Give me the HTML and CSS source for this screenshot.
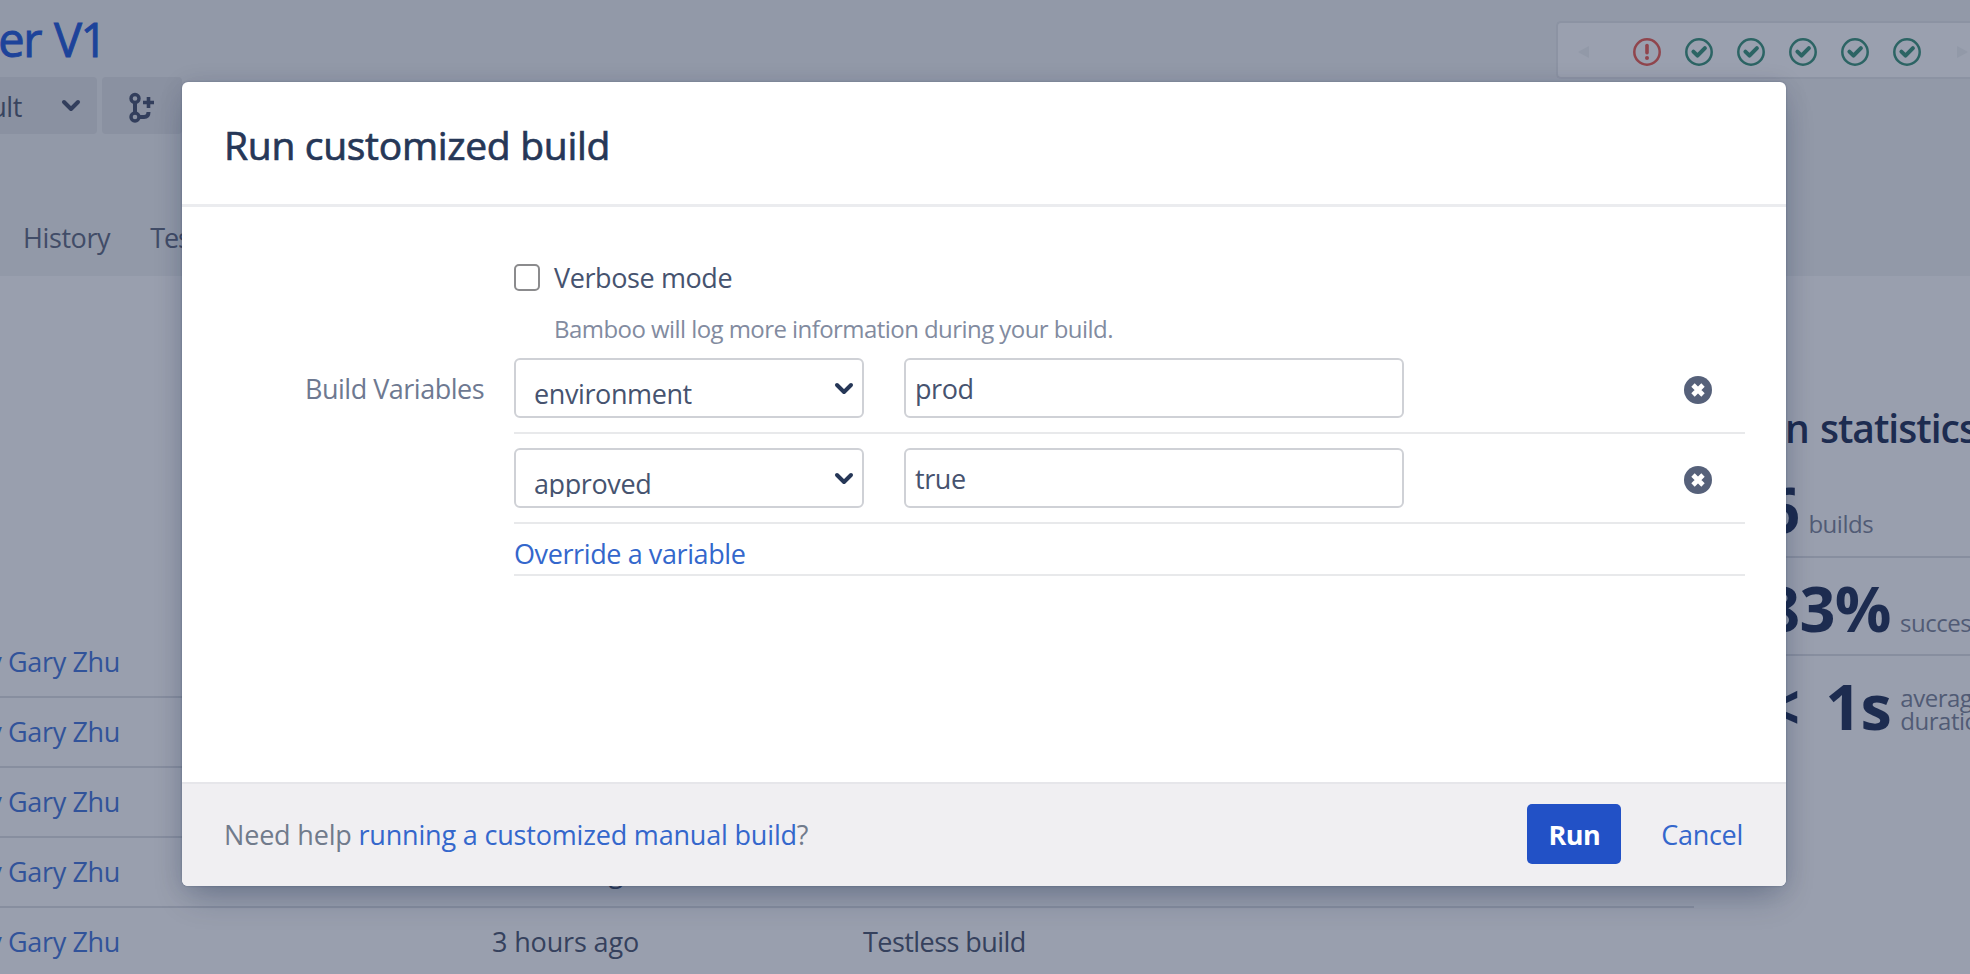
FILE: index.html
```html
<!DOCTYPE html>
<html lang="en">
<head>
<meta charset="utf-8">
<title>Run customized build</title>
<link rel="stylesheet" href="styles.css">
</head>
<body>
<svg class="sprite" aria-hidden="true">
  <symbol id="ok" viewBox="0 0 28 28"><circle cx="14" cy="14" r="12.7" fill="none" stroke="currentColor" stroke-width="2.5"/><path d="M8.4 13.6l4.1 4.1 7.4-7.6" fill="none" stroke="currentColor" stroke-width="4" stroke-linecap="round" stroke-linejoin="round"/></symbol>
  <symbol id="fail" viewBox="0 0 28 28"><circle cx="14" cy="14" r="12.7" fill="none" stroke="currentColor" stroke-width="2.5"/><path d="M14 7.6v7.2" fill="none" stroke="currentColor" stroke-width="3.6" stroke-linecap="round"/><circle cx="14" cy="20" r="2" fill="currentColor"/></symbol>
  <symbol id="chev" viewBox="0 0 20 14"><path d="M3 3l7 7 7-7" fill="none" stroke="currentColor" stroke-width="4" stroke-linecap="round" stroke-linejoin="round"/></symbol>
  <symbol id="remove" viewBox="0 0 28 28"><circle cx="14" cy="14" r="14" fill="#56617a"/><path d="M9 9l10 10M19 9l-10 10" stroke="#fff" stroke-width="4.8"/></symbol>
</svg>
<div class="page">
  <header class="top">
    <div class="plan">
      <h1 class="plan-title"><span class="t-plan">er V1</span></h1>
      <div class="toolbar">
        <div class="branch"><span>ult</span><svg class="chev"><use href="#chev"/></svg></div>
        <div class="create">
          <svg width="28" height="32" viewBox="0 0 28 32" fill="none" stroke="currentColor" stroke-width="3.4"><circle cx="7" cy="6.5" r="4"/><circle cx="7" cy="25" r="4"/><path d="M7 10.500v10.500M11 25h5q4.500 0 4.500-5" stroke-width="4"/><path d="M20.500 5v11M15 10.500h11" stroke-width="3.600"/></svg>
        </div>
      </div>
      <nav class="tabs"><span class="t-history">History</span><span>Tests</span></nav>
    </div>
    <div class="builds-nav">
      <span class="arrow"></span>
      <svg class="st bad"><use href="#fail"/></svg>
      <svg class="st"><use href="#ok"/></svg>
      <svg class="st"><use href="#ok"/></svg>
      <svg class="st"><use href="#ok"/></svg>
      <svg class="st"><use href="#ok"/></svg>
      <svg class="st"><use href="#ok"/></svg>
      <span class="arrow next"></span>
    </div>
  </header>
  <main class="main">
    <div class="history">
      <div class="row"><span class="who">y Gary Zhu</span></div>
      <div class="row"><span class="who">y Gary Zhu</span></div>
      <div class="row"><span class="who">y Gary Zhu</span></div>
      <div class="row"><span class="who">y Gary Zhu</span><span class="when">3 hours ago</span></div>
      <div class="row"><span class="who">y Gary Zhu</span><span class="when">3 hours ago</span><span class="tests">Testless build</span></div>
    </div>
    <aside class="stats">
      <h2 class="stats-title">n statistics</h2>
      <div class="stat first"><b>6</b><span>builds</span></div>
      <div class="stat"><b class="pct">83%</b><span>successful</span></div>
      <div class="stat last"><b class="dur">&lt; 1s</b><div><span class="two">average<br>duration</span></div></div>
    </aside>
  </main>
</div>
<section class="dialog" role="dialog">
  <header class="dialog-head"><h2 class="t-title">Run customized build</h2></header>
  <div class="dialog-body">
    <div class="verbose"><i class="check"></i><span class="t-verbose">Verbose mode</span></div>
    <p class="hint"><span class="t-hint">Bamboo will log more information during your build.</span></p>
    <div class="vars">
      <div class="label"><span class="t-label">Build Variables</span></div>
      <div class="list">
        <div class="var">
          <div class="select"><span class="clip"><span class="t-env">environment</span></span><svg class="chev"><use href="#chev"/></svg></div>
          <div class="input"><span class="t-prod">prod</span></div>
          <svg class="remove"><use href="#remove"/></svg>
        </div>
        <div class="var">
          <div class="select"><span class="clip"><span class="t-app">approved</span></span><svg class="chev"><use href="#chev"/></svg></div>
          <div class="input"><span class="t-true">true</span></div>
          <svg class="remove"><use href="#remove"/></svg>
        </div>
        <div class="override"><a class="t-over">Override a variable</a></div>
      </div>
    </div>
  </div>
  <footer class="dialog-foot">
    <div class="help">Need help <a>running a customized manual build</a>?</div>
    <div class="actions"><span class="run">Run</span><a class="t-cancel">Cancel</a></div>
  </footer>
</section>
</body>
</html>
```
FILE: styles.css
```css
* { box-sizing: border-box; }
body { margin: 0; height: 974px; overflow: hidden; position: relative; background: #999fae; font-family: "Open Sans", "Noto Sans", sans-serif; font-size: 27px; line-height: 40px; color: #46526c; }
h1, h2, p { margin: 0; font-weight: 500; }
span, a, b, h2 { white-space: nowrap; }
.sprite { position: absolute; width: 0; height: 0; }
.chev { width: 20px; height: 14px; flex: none; }
.page { height: 974px; overflow: hidden; display: flex; flex-direction: column; }

.top { height: 276px; flex: none; background: #9299a8; display: flex; justify-content: space-between; align-items: flex-start; }
.plan { padding-top: 9px; width: 500px; }
.plan-title { width: 106px; height: 68px; display: flex; justify-content: flex-end; font-size: 47px; line-height: 60px; color: #1d439a; letter-spacing: -1.4px; word-spacing: 2px; -webkit-text-stroke: 0.9px #1d439a; }
.toolbar { display: flex; gap: 5px; height: 57px; color: #323e5c; }
.branch { width: 97px; background: #8a91a1; display: flex; align-items: center; justify-content: space-between; padding: 2px 16px 0 0; border-radius: 0 4px 4px 0; }
.branch span { width: 22px; display: flex; justify-content: flex-end; color: #38445f; letter-spacing: -0.4px; }
.branch .chev { margin-top: -2px; }
.create { width: 80px; background: #8a91a1; border-radius: 4px; padding: 15px 0 0 26px; line-height: 0; }
.tabs { display: flex; gap: 40px; padding: 84px 0 0 23px; color: #414c67; }
.tabs span { letter-spacing: -0.4px; }
.tabs span + span { letter-spacing: -1.1px; }

.builds-nav { width: 414px; height: 58px; margin-top: 21px; border: 2px solid #8c93a3; border-right: 0; border-radius: 5px 0 0 5px; background: #9aa0af; display: flex; align-items: center; gap: 24px; padding-left: 20px; color: #2c6464; }
.st { width: 28px; height: 28px; flex: none; margin-top: 4px; }
.bad { color: #90454d; }
.arrow { width: 11px; height: 12px; margin: 4px 20px 0 0; background: #9299a8; clip-path: polygon(0 50%, 100% 0, 100% 100%); flex: none; }
.next { margin: 4px 0 0 12px; transform: scaleX(-1); }

.main { flex: 1; display: flex; min-height: 0; }
.history { width: 1694px; padding-top: 352px; flex: none; }
.row { height: 70px; border-bottom: 2px solid #878e9f; display: flex; padding-top: 14px; color: #35415d; }
.who { width: 120px; display: flex; justify-content: flex-end; color: #31539a; letter-spacing: -0.35px; }
.when { width: 370px; margin-left: 372px; letter-spacing: -0.15px; }
.tests { letter-spacing: -0.55px; margin-left: 1px; }
.stats { flex: 1; padding: 127px 0 0 70px; overflow: hidden; color: #1d2c50; }
.stats-title { font-size: 39px; line-height: 50px; padding-left: 21px; letter-spacing: -1px; word-spacing: 2px; font-weight: 600; }
.stat { height: 98px; border-bottom: 2px solid #878e9f; display: flex; align-items: baseline; gap: 9px; line-height: 80px; padding-top: 10px; }
.stat.first { padding-top: 16px; height: 105px; }
.stat.last { border: 0; }
.stat b { font-size: 63px; font-weight: 700; letter-spacing: -0.6px; }
.stat .dur { word-spacing: 10px; }
.stat span { font-size: 24px; color: #515b75; letter-spacing: -0.5px; }
.stat .two { display: inline-block; line-height: 23px; }

.dialog { position: absolute; left: 182px; top: 82px; width: 1604px; height: 804px; border-radius: 6px; background: #fff; box-shadow: 0 0 2px rgba(9,30,66,.3), 0 16px 32px -8px rgba(9,30,66,.3), 0 2px 24px rgba(9,30,66,.1); display: flex; flex-direction: column; overflow: hidden; color: #46536f; }
.dialog-head { height: 125px; border-bottom: 3px solid #ebecef; padding: 38px 0 0 42px; flex: none; }
.dialog-head h2 { font-size: 39px; line-height: 50px; color: #263757; letter-spacing: -0.3px; -webkit-text-stroke: 0.7px #263757; }
.dialog-body { flex: 1; padding: 50px 40px 0 0; }
.verbose { display: flex; align-items: center; gap: 14px; padding-left: 332px; height: 40px; }
.verbose span { padding-top: 2px; }
.check { width: 26px; height: 27px; border: 2px solid #8b8b8d; border-radius: 5px; }
.hint { padding: 12px 0 0 372px; height: 59px; font-size: 24px; color: #828ba0; letter-spacing: -0.56px; }
.vars { display: flex; margin-top: 2px; }
.label { width: 332px; padding: 11px 30px 0 0; display: flex; justify-content: flex-end; flex: none; color: #6e7991; }
.list { flex: 1; margin-right: 1px; }
.var { height: 90px; border-bottom: 2px solid #e8e9eb; display: flex; padding-bottom: 14px; align-items: flex-end; }
.vars .var:first-child { height: 76px; }
.select, .input { height: 60px; border: 2px solid #cfd1d6; border-radius: 6px; flex: none; }
.select { width: 350px; display: flex; padding: 0 8px 0 18px; justify-content: space-between; }
.select .clip { height: 36px; overflow: hidden; line-height: 46px; margin-top: 11px; }
.select .chev { color: #263757; margin-top: 22px; }
.input { width: 500px; margin-left: 40px; padding: 9px 0 0 9px; }
.remove { width: 28px; height: 28px; margin: 0 0 14px 280px; flex: none; }
.override { height: 52px; border-bottom: 2px solid #e8e9eb; padding-top: 10px; }
a { color: #3467cc; }
.t-verbose, .t-env, .t-prod, .t-app, .t-true, .t-over, .t-cancel { letter-spacing: -0.4px; }
.t-label { letter-spacing: -0.5px; }
.dialog-foot { height: 104px; background: #f0eff2; border-top: 2px solid #e6e6ea; display: flex; justify-content: space-between; padding: 20px 42px 0 42px; flex: none; }
.help { padding-top: 11px; color: #717b8c; white-space: nowrap; letter-spacing: -0.18px; }
.actions { display: flex; align-items: flex-start; gap: 40px; padding-right: 1px; }
.run { width: 94px; height: 60px; background: #2251c6; color: #fff; font-weight: 700; border-radius: 5px; text-align: center; line-height: 61px; letter-spacing: -0.6px; }
.t-cancel { line-height: 61px; letter-spacing: -0.3px; }
```
